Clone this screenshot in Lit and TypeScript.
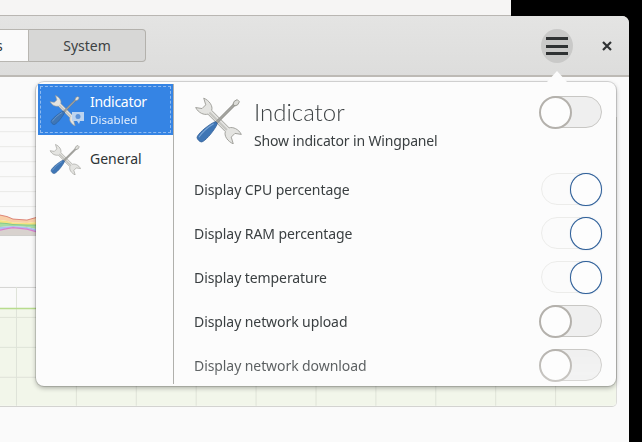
import { LitElement, html, css, svg } from "lit";
import { customElement } from "lit/decorators.js";

const toolIcon = (size: number, cls = "") => html`<svg class=${cls} width=${size} height=${size} viewBox="0 0 48 48">
  <g transform="translate(24.5 24.5) scale(.95) translate(-24 -24)">
  <g transform="translate(24 24.5) rotate(45)">
    <path d="M-13 -2.8C-15 -7 -22 -8.5 -28 -6L-21.5 -2.5L-21.5 3L-27 7C-21 9 -15 6.5 -13 2.8L13 2.8C15 7 22 8.5 28 6L21.5 2.5L21.5 -3L27 -7C21 -9 15 -6.5 13 -2.8Z" fill="#e4e4e1" stroke="#9a9a95" stroke-width=".9" stroke-linejoin="round"/>
    <rect x="-13" y="-0.6" width="26" height="2.2" fill="#c6c6c2"/>
  </g>
  <g transform="translate(24 24) rotate(-45)">
    <rect x="-4" y="-1.2" width="28" height="2.4" fill="#a5a5a0" stroke="#6f6f6b" stroke-width=".6"/>
    <path d="M23 -1.4L26 -2.6L29.5 -1.6L29.5 1.6L26 2.6L23 1.4Z" fill="#dcdcd8" stroke="#85857d" stroke-width=".8"/>
    <path d="M-28.5 -3.4C-26 -5.4 -14 -4.8 -5 -2.2L-3 -1.2L-3 1.2L-5 2.2C-14 4.8 -26 5.4 -28.5 3.4C-30 2 -30 -2 -28.5 -3.4Z" fill="#3f76b5" stroke="#2a5a94" stroke-width=".8"/>
    <path d="M-27 -2.2C-20 -3.4 -12 -2.8 -6 -1.2" fill="none" stroke="#7ea8d8" stroke-width="1"/>
  </g>
  </g>
</svg>`;

const vgrid = [16, 76, 136, 196, 256, 316, 376, 436, 496, 556];

const xs = [0, 7, 13, 27, 36, 40];
const line = (ys: number[]) => xs.map((x, i) => `${x} ${ys[i] - 118}`).join("L");
const back = (ys: number[]) => xs.map((x, i) => `${x} ${ys[i] - 118}`).reverse().join("L");
const red = [216, 217.5, 220, 221, 218.5, 219];
const orange = [221, 222, 223.5, 224, 223, 224];
const yellow = [224, 224.5, 225.5, 226, 226, 227];
const green = [228, 227.5, 227, 228, 230, 231];
const blue = [231, 229.5, 228.5, 230, 232.5, 233];
const band = (a: number[], b: number[], fill: string) =>
  svg`<path d="M${line(a)}L${back(b)}Z" fill=${fill}/>`;

const chart = svg`
  ${[132, 147, 162, 177, 192, 207, 222].map((y) => svg`<path d="M0 ${y - 118 + .5}H617" stroke="#e9e9e7"/>`)}
  <path d="M0 0.5H617" stroke="#d5d5d3"/>
  ${band(red, orange, "#f9cfa8")}
  ${band(orange, yellow, "#f7e383")}
  ${band(yellow, green, "#a8dca2")}
  ${band(green, blue, "#aebff0")}
  <path d="M${line(blue)}L40 118.5L0 118.5Z" fill="#d8d2ce"/>
  <path d="M${line(red)}" fill="none" stroke="#dc8577" stroke-width="1"/>
  <path d="M${line(yellow)}" fill="none" stroke="#84c98b" stroke-width="1"/>
  <path d="M${line(blue)}" fill="none" stroke="#da7fce" stroke-width="1.2"/>
  <path d="M0 118.5H40" stroke="#cfcfcc"/>
  <rect x="0" y="191" width="617" height="98" fill="#f2f6ea"/>
  <path d="M0 170.5H617" stroke="#d5d5d3"/>
  ${[200, 230, 260].map((y) => svg`<path d="M0 ${y + .5}H617" stroke="#dfe3d8"/>`)}
  ${vgrid.map((x) => svg`<path d="M${x + .5} 170V289" stroke="#dfe3d8"/>`)}
  <path d="M0 191.5H617" stroke="#b8dc8e" stroke-width="1.5"/>
`;

@customElement("app-root")
export class AppRoot extends LitElement {
  static styles = css`
    :host {
      display: block;
      width: 642px;
      height: 442px;
      background: #000;
      position: relative;
      overflow: hidden;
      font-family: "Noto Sans", "Open Sans", sans-serif;
      color: #2e3436;
    }
    .behind {
      width: 511px;
      height: 15px;
      background: #f6f5f4;
      border-bottom: 1px solid #b9b6b2;
      box-sizing: content-box;
    }
    .win {
      width: 629px;
      height: 426px;
      background: #fafafa;
      border-top-right-radius: 7px;
      overflow: hidden;
    }
    .head {
      height: 61px;
      box-sizing: border-box;
      background: linear-gradient(#e4e4e3, #dddddc);
      border-bottom: 2px solid #bdbab5;
      display: flex;
      align-items: flex-start;
      padding-top: 13px;
    }
    .seg {
      height: 33px;
      box-sizing: border-box;
      display: flex;
      align-items: center;
      justify-content: center;
      font-size: 14px;
    }
    .seg.a {
      width: 29px;
      background: #fafafa;
      border: 1px solid #b8b6b1;
      border-left: 0;
      justify-content: flex-start;
    }
    .seg.a span { margin-left: -4px; }
    .seg.b {
      width: 117px;
      background: #d7d7d6;
      border: 1px solid #b3b1ac;
      border-left: 0;
      border-radius: 0 4px 4px 0;
      color: #3d4244;
    }
    .spacer { flex: 1; }
    .menu {
      width: 32px;
      height: 34px;
      border-radius: 50%;
      background: #c9c9c8;
      display: flex;
      flex-direction: column;
      align-items: center;
      justify-content: center;
      gap: 4.6px;
    }
    .menu i {
      display: block;
      width: 22px;
      height: 3px;
      background: #2f3233;
    }
    .close {
      width: 56px;
      box-sizing: border-box;
      padding: 12px 0 0 12px;
      display: flex;
      justify-content: center;
    }
    .chart {
      display: block;
      margin-top: 40px;
      width: 617px;
      height: 290px;
      border-bottom: 1px solid #d3d3d0;
      border-right: 1px solid #dcdcd9;
      border-bottom-right-radius: 5px;
      box-sizing: border-box;
    }
    .pop {
      position: absolute;
      left: 36px;
      top: 82px;
      width: 580px;
      height: 304px;
      box-sizing: border-box;
      background: #fcfcfc;
      border-radius: 8px;
      box-shadow: 0 0 0 1px rgba(0,0,0,.13), 0 2px 5px rgba(0,0,0,.3);
      padding: 2px;
      display: flex;
    }
    .arrow {
      position: absolute;
      left: 511px;
      top: -11px;
      width: 20px;
      height: 11px;
    }
    .side {
      width: 136px;
      flex: none;
      box-sizing: border-box;
      border-right: 1px solid #b0b0ac;
      display: flex;
      flex-direction: column;
    }
    .item {
      box-sizing: border-box;
      display: flex;
      align-items: center;
      gap: 9px;
      padding-left: 11px;
      position: relative;
      color: #2e3436;
    }
    .item.sel {
      background: #3584e4;
      color: #fff;
      outline: 1px dashed rgba(255,255,255,.45);
      outline-offset: -3px;
      height: 51px;
    }
    .item.gen { height: 48px; }
    .item .t { font-size: 14px; line-height: 18px; }
    .item.sel .t { letter-spacing: -.3px; padding-top: 1px; }
    .item .s { font-size: 11.6px; line-height: 17px; opacity: .85; }
    .emblem {
      position: absolute;
      left: 33px;
      top: 27px;
    }
    .main {
      flex: 1;
      padding: 12px 12px 0 20px;
      overflow: hidden;
      -webkit-mask-image: linear-gradient(#000 262px, rgba(0,0,0,.68) 300px);
      mask-image: linear-gradient(#000 262px, rgba(0,0,0,.68) 300px);
    }
    .top {
      display: flex;
      align-items: flex-start;
      height: 71px;
    }
    .top .txt { margin-left: 12px; flex: 1; }
    .title {
      font-family: "Lato", "Open Sans", sans-serif;
      font-weight: 300;
      font-size: 24px;
      line-height: 32px;
      color: #3d4244;
    }
    .sub {
      font-size: 14px;
      letter-spacing: -.15px;
      line-height: 20px;
      margin-top: 3px;
      color: #3a3f41;
    }
    .row {
      height: 44px;
      display: flex;
      align-items: center;
      justify-content: space-between;
      font-size: 14px;
      letter-spacing: -.08px;
      color: #3a3f41;
    }
    .sw {
      position: relative;
      width: 63px;
      height: 32px;
      flex: none;
    }
    .track {
      position: absolute;
      left: 1px;
      top: 0;
      right: 0;
      bottom: 0;
      border-radius: 16px;
      background: #efefef;
      border: 1px solid #c8c7c4;
      box-sizing: border-box;
    }
    .knob {
      position: absolute;
      left: 0;
      top: -.5px;
      width: 33px;
      height: 33px;
      box-sizing: border-box;
      border-radius: 50%;
      background: #fdfdfd;
      border: 2px solid #b4b1ac;
    }
    .sw.on .track {
      left: 2px;
      right: 2px;
      background: #fbfbfb;
      border-color: #ececea;
    }
    .sw.on .knob {
      left: 31px;
      width: 32px;
      height: 33px;
      border: 1.5px solid #2d5e98;
      box-shadow: 0 0 1px rgba(45,94,152,.5);
    }
  `;

  private sw(on: boolean) {
    return html`<div class="sw ${on ? "on" : ""}"><div class="track"></div><div class="knob"></div></div>`;
  }

  render() {
    const rows: [string, boolean][] = [
      ["Display CPU percentage", true],
      ["Display RAM percentage", true],
      ["Display temperature", true],
      ["Display network upload", false],
      ["Display network download", false],
    ];
    return html`
      <div class="behind"></div>
      <div class="win">
        <div class="head">
          <div class="seg a"><span>s</span></div>
          <div class="seg b">System</div>
          <div class="spacer"></div>
          <div class="menu"><i></i><i></i><i></i></div>
          <div class="close">
            <svg width="10" height="10" viewBox="0 0 10 10"><path d="M1 1L9 9M9 1L1 9" stroke="#2f3233" stroke-width="2.2"/></svg>
          </div>
        </div>
        <svg class="chart" viewBox="0 0 617 289" width="617" height="289">${chart}</svg>
      </div>
      <div class="pop">
        <svg class="arrow" viewBox="0 0 20 11"><path d="M0 11L10 0L20 11Z" fill="#fcfcfc"/></svg>
        <div class="side">
          <div class="item sel">
            ${toolIcon(32, "ic")}
            <svg class="emblem" width="14" height="14" viewBox="0 0 14 14"><path d="M1 1H13V10H9L8 13L6 10H1Z" fill="#bcd4f0"/><circle cx="7" cy="5.5" r="2.5" fill="#5f95da"/></svg>
            <div><div class="t">Indicator</div><div class="s">Disabled</div></div>
          </div>
          <div class="item gen">
            ${toolIcon(32)}
            <div class="t">General</div>
          </div>
        </div>
        <div class="main">
          <div class="top">
            ${toolIcon(48)}
            <div class="txt">
              <div class="title">Indicator</div>
              <div class="sub">Show indicator in Wingpanel</div>
            </div>
            ${this.sw(false)}
          </div>
          ${rows.map(([t, on]) => html`<div class="row"><span>${t}</span>${this.sw(on)}</div>`)}
        </div>
      </div>
    `;
  }
}
